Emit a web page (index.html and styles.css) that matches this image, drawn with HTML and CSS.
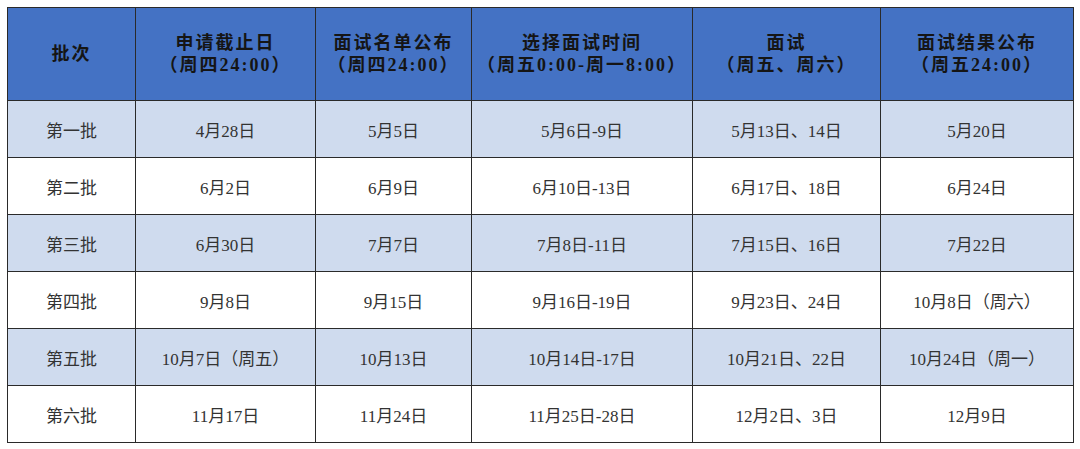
FILE: index.html
```html
<!DOCTYPE html>
<html lang="zh">
<head>
<meta charset="utf-8">
<link rel="stylesheet" href="styles.css">
</head>
<body>
<table class="schedule">
  <colgroup>
    <col class="c1"><col class="c2"><col class="c3"><col class="c4"><col class="c5"><col class="c6">
  </colgroup>
  <thead>
    <tr>
      <th>批次</th>
      <th>申请截止日<br>（周四24:00）</th>
      <th>面试名单公布<br>（周四24:00）</th>
      <th>选择面试时间<br>（周五0:00-周一8:00）</th>
      <th>面试<br>（周五、周六）</th>
      <th>面试结果公布<br>（周五24:00）</th>
    </tr>
  </thead>
  <tbody>
    <tr class="shade"><td>第一批</td><td>4月28日</td><td>5月5日</td><td>5月6日-9日</td><td>5月13日、14日</td><td>5月20日</td></tr>
    <tr><td>第二批</td><td>6月2日</td><td>6月9日</td><td>6月10日-13日</td><td>6月17日、18日</td><td>6月24日</td></tr>
    <tr class="shade"><td>第三批</td><td>6月30日</td><td>7月7日</td><td>7月8日-11日</td><td>7月15日、16日</td><td>7月22日</td></tr>
    <tr><td>第四批</td><td>9月8日</td><td>9月15日</td><td>9月16日-19日</td><td>9月23日、24日</td><td>10月8日（周六）</td></tr>
    <tr class="shade"><td>第五批</td><td>10月7日（周五）</td><td>10月13日</td><td>10月14日-17日</td><td>10月21日、22日</td><td>10月24日（周一）</td></tr>
    <tr><td>第六批</td><td>11月17日</td><td>11月24日</td><td>11月25日-28日</td><td>12月2日、3日</td><td>12月9日</td></tr>
  </tbody>
</table>
</body>
</html>
```

FILE: styles.css
```css
html, body {
  margin: 0;
  padding: 0;
  background: #ffffff;
}
body {
  padding: 7px 0 0 7px;
  font-family: "Liberation Serif", "Noto Sans CJK SC", serif;
}
.schedule {
  border-collapse: collapse;
  table-layout: fixed;
  width: 1066px;
}
.c1 { width: 128px; }
.c2 { width: 180px; }
.c3 { width: 156px; }
.c4 { width: 221px; }
.c5 { width: 188px; }
.c6 { width: 193px; }
.schedule th,
.schedule td {
  border: 1px solid #2a2a2a;
  text-align: center;
  vertical-align: middle;
  padding: 0;
}
.schedule th {
  background: #4472c4;
  color: #151515;
  font-size: 18px;
  font-weight: bold;
  letter-spacing: 2px;
  line-height: 22px;
  height: 92px;
}
.schedule td {
  color: #333333;
  font-size: 17px;
  height: 56px;
}
.schedule tr.shade td {
  background: #cfdbee;
}
```
